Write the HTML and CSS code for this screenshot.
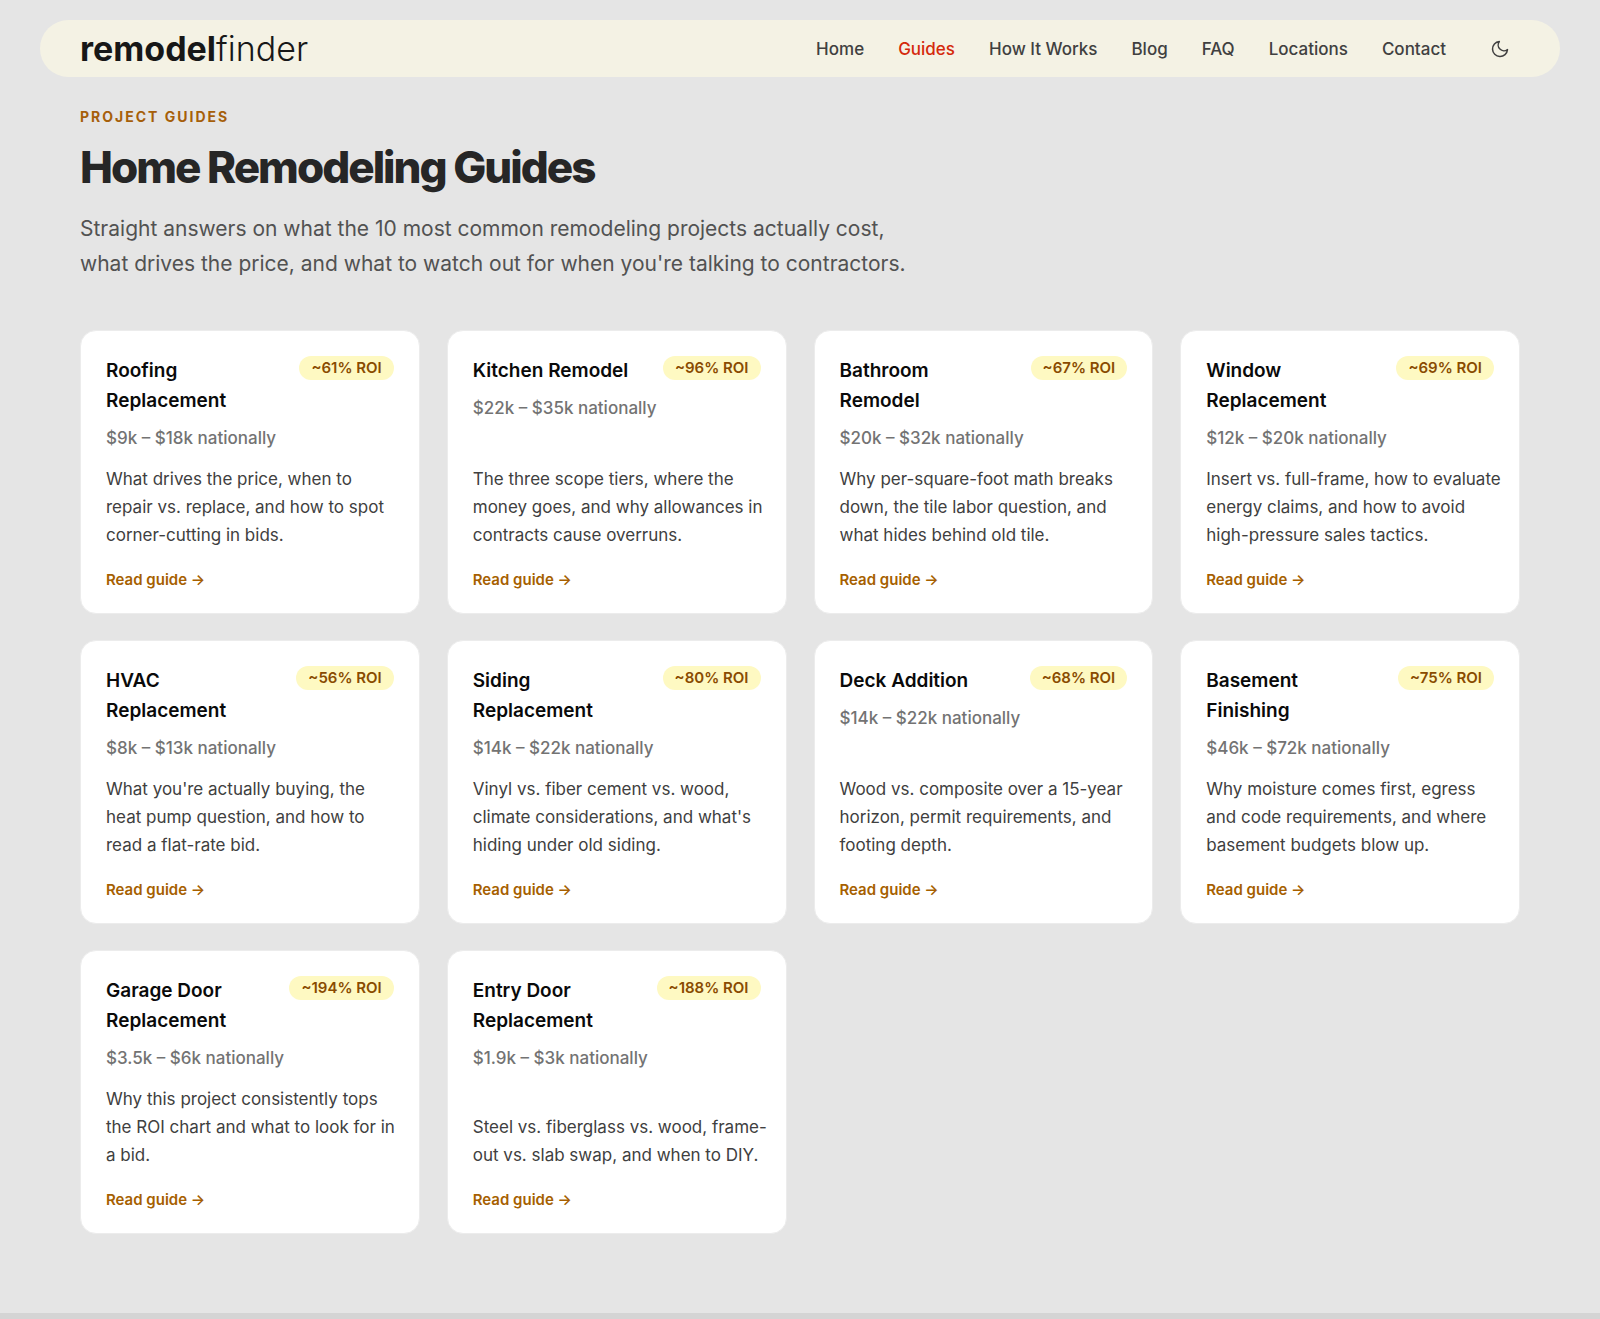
FILE: index.html
```html
<!DOCTYPE html>
<html lang="en">
<head>
<meta charset="utf-8">
<meta name="viewport" content="width=device-width, initial-scale=1">
<title>Home Remodeling Guides | remodelfinder</title>
<link rel="stylesheet" href="styles.css">
</head>
<body>
<header class="navbar">
  <a class="logo" href="#"><span class="logo-strong">remodel</span>finder</a>
  <nav class="nav" aria-label="Main">
    <a href="#">Home</a>
    <a class="active" href="#" aria-current="page">Guides</a>
    <a href="#">How It Works</a>
    <a href="#">Blog</a>
    <a href="#">FAQ</a>
    <a href="#">Locations</a>
    <a href="#">Contact</a>
    <button class="theme-toggle" type="button" aria-label="Toggle dark mode">
      <svg viewBox="0 0 24 24" width="20" height="20" fill="none" stroke="currentColor" stroke-width="1.8" stroke-linecap="round" stroke-linejoin="round" aria-hidden="true"><path d="M21 12.79A9 9 0 1 1 11.21 3 7 7 0 0 0 21 12.79z"/></svg>
    </button>
  </nav>
</header>
<main class="main">
  <p class="eyebrow">Project Guides</p>
  <h1 class="title">Home Remodeling Guides</h1>
  <p class="lead">Straight answers on what the 10 most common remodeling projects actually cost, what drives the price, and what to watch out for when you're talking to contractors.</p>
  <div class="grid">
    <article class="card">
      <div class="card-head"><h2>Roofing Replacement</h2><span class="badge">~61% ROI</span></div>
      <p class="price">$9k – $18k nationally</p>
      <p class="desc">What drives the price, when to repair vs. replace, and how to spot corner-cutting in bids.</p>
      <a class="more" href="#">Read guide →</a>
    </article>
    <article class="card">
      <div class="card-head"><h2>Kitchen Remodel</h2><span class="badge">~96% ROI</span></div>
      <p class="price">$22k – $35k nationally</p>
      <p class="desc">The three scope tiers, where the money goes, and why allowances in contracts cause overruns.</p>
      <a class="more" href="#">Read guide →</a>
    </article>
    <article class="card">
      <div class="card-head"><h2>Bathroom Remodel</h2><span class="badge">~67% ROI</span></div>
      <p class="price">$20k – $32k nationally</p>
      <p class="desc">Why per-square-foot math breaks down, the tile labor question, and what hides behind old tile.</p>
      <a class="more" href="#">Read guide →</a>
    </article>
    <article class="card">
      <div class="card-head"><h2>Window Replacement</h2><span class="badge">~69% ROI</span></div>
      <p class="price">$12k – $20k nationally</p>
      <p class="desc">Insert vs. full-frame, how to evaluate energy claims, and how to avoid high-pressure sales tactics.</p>
      <a class="more" href="#">Read guide →</a>
    </article>
    <article class="card">
      <div class="card-head"><h2>HVAC Replacement</h2><span class="badge">~56% ROI</span></div>
      <p class="price">$8k – $13k nationally</p>
      <p class="desc">What you're actually buying, the heat pump question, and how to read a flat-rate bid.</p>
      <a class="more" href="#">Read guide →</a>
    </article>
    <article class="card">
      <div class="card-head"><h2>Siding Replacement</h2><span class="badge">~80% ROI</span></div>
      <p class="price">$14k – $22k nationally</p>
      <p class="desc">Vinyl vs. fiber cement vs. wood, climate considerations, and what's hiding under old siding.</p>
      <a class="more" href="#">Read guide →</a>
    </article>
    <article class="card">
      <div class="card-head"><h2>Deck Addition</h2><span class="badge">~68% ROI</span></div>
      <p class="price">$14k – $22k nationally</p>
      <p class="desc">Wood vs. composite over a 15-year horizon, permit requirements, and footing depth.</p>
      <a class="more" href="#">Read guide →</a>
    </article>
    <article class="card">
      <div class="card-head"><h2>Basement Finishing</h2><span class="badge">~75% ROI</span></div>
      <p class="price">$46k – $72k nationally</p>
      <p class="desc">Why moisture comes first, egress and code requirements, and where basement budgets blow up.</p>
      <a class="more" href="#">Read guide →</a>
    </article>
    <article class="card">
      <div class="card-head"><h2>Garage Door Replacement</h2><span class="badge">~194% ROI</span></div>
      <p class="price">$3.5k – $6k nationally</p>
      <p class="desc">Why this project consistently tops the ROI chart and what to look for in a bid.</p>
      <a class="more" href="#">Read guide →</a>
    </article>
    <article class="card">
      <div class="card-head"><h2>Entry Door Replacement</h2><span class="badge">~188% ROI</span></div>
      <p class="price">$1.9k – $3k nationally</p>
      <p class="desc">Steel vs. fiberglass vs. wood, frame-out vs. slab swap, and when to DIY.</p>
      <a class="more" href="#">Read guide →</a>
    </article>
  </div>
</main>
<footer class="footer"></footer>
</body>
</html>
```
FILE: styles.css
```css
* {
  box-sizing: border-box;
}

body {
  margin: 0;
  background: #e5e5e5;
  color: #262626;
  font-family: Inter, "Liberation Sans", sans-serif;
}

h1, h2, p {
  margin: 0;
}

a {
  color: inherit;
  text-decoration: none;
}

.navbar {
  display: flex;
  align-items: center;
  justify-content: space-between;
  margin: 20px 40px 0;
  padding: 8px 40px;
  border-radius: 32px;
  background: #f4f2e4;
}

.logo {
  font-size: 34px;
  font-weight: 300;
  font-optical-sizing: none;
  line-height: 41px;
  color: #171717;
}

.logo-strong {
  font-weight: 700;
}

.nav {
  display: flex;
  align-items: center;
  gap: 34px;
  font-size: 17px;
  font-weight: 500;
  line-height: 24px;
  color: #404040;
}

.nav .active {
  color: #d4290c;
}

.theme-toggle {
  display: flex;
  align-items: center;
  justify-content: center;
  width: 40px;
  height: 40px;
  padding: 0;
  border: 0;
  background: none;
  color: #404040;
}

.main {
  padding: 28px 80px 79px;
}

.eyebrow {
  font-size: 14px;
  font-weight: 700;
  line-height: 24px;
  letter-spacing: 2px;
  text-transform: uppercase;
  color: #a65f0a;
}

.title {
  margin-top: 12px;
  font-size: 44px;
  font-weight: 800;
  line-height: 52px;
  letter-spacing: -2px;
}

.lead {
  max-width: 840px;
  margin-top: 18px;
  font-size: 21px;
  line-height: 35px;
  color: #525252;
}

.grid {
  display: grid;
  grid-template-columns: repeat(4, 1fr);
  gap: 26px 27px;
  margin-top: 49px;
}

.card {
  display: flex;
  flex-direction: column;
  padding: 25px 25px 21px;
  border: 1px solid #ececec;
  border-radius: 16px;
  background: #fff;
}

.card-head {
  display: flex;
  align-items: flex-start;
  justify-content: space-between;
  gap: 24px;
}

.card-head h2 {
  font-size: 19px;
  font-weight: 600;
  line-height: 30px;
  color: #0a0a0a;
}

.badge {
  padding: 0 12px;
  border-radius: 12px;
  background: #fef9c2;
  font-size: 15px;
  font-weight: 600;
  line-height: 24px;
  white-space: nowrap;
  color: #894b00;
}

.price {
  margin-top: 10px;
  font-size: 17px;
  font-weight: 500;
  line-height: 24px;
  color: #737373;
}

/* The text may run slightly into the card's right padding. */
.desc {
  margin-top: auto;
  margin-right: -8px;
  padding-top: 15px;
  font-size: 17px;
  line-height: 28px;
  color: #404040;
}

.more {
  margin-top: 19px;
  font-size: 15px;
  font-weight: 600;
  line-height: 24px;
  color: #a65f00;
}

.footer {
  height: 6px;
  background: #d4d4d4;
}
```
